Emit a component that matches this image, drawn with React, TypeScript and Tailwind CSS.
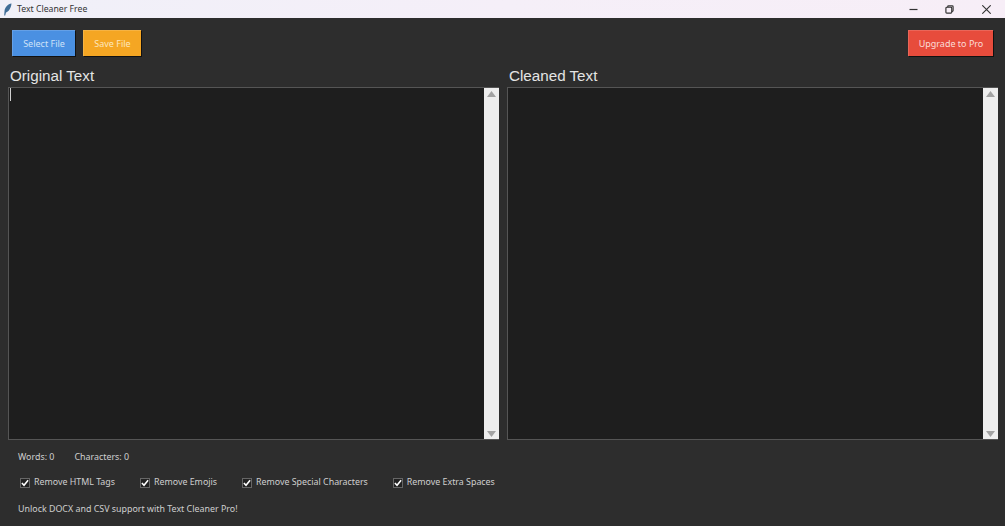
import React from 'react';

const uiFont = "font-['Noto_Sans','Open_Sans',sans-serif]";

const ActionButton: React.FC<{ label: string; className: string }> = ({ label, className }) => (
  <button className={`h-[26px] flex items-center justify-center text-[9px] border-t border-l border-white/15 shadow-[1px_1px_0_#111] ${uiFont} ${className}`}>
    {label}
  </button>
);

const ScrollBar = () => (
  <div className="w-[15px] h-full bg-[#eeeeee] flex flex-col items-center justify-between pt-[3px] pb-[2px] shrink-0">
    <svg width="9" height="6" viewBox="0 0 9 6"><path d="M4.5 0 L9 6 L0 6 Z" fill="#a3a3a3" /></svg>
    <svg width="9" height="6" viewBox="0 0 9 6"><path d="M0 0 L9 0 L4.5 6 Z" fill="#a3a3a3" /></svg>
  </div>
);

const TextPanel: React.FC<{ title: string; caret?: boolean }> = ({ title, caret }) => (
  <div className="flex-1 flex flex-col min-w-0">
    <h2 className="h-[19px] pl-[2px] text-[15.2px] leading-[15px] text-[#e4e4e4] font-['Liberation_Sans',sans-serif]">{title}</h2>
    <div className="flex-1 flex border border-[#555] border-r-0 bg-[#1e1e1e] min-h-0">
      <div className="flex-1 pl-[1px]">
        {caret && <div className="w-[1px] h-[13px] bg-[#d0d0d0]" />}
      </div>
      <ScrollBar />
    </div>
  </div>
);

const Check: React.FC<{ label: string }> = ({ label }) => (
  <label className="flex items-center gap-[4px]">
    <span className="w-[10px] h-[10px] bg-[#222] border border-[#666] flex items-center justify-center">
      <svg width="9" height="8" viewBox="0 0 9 8"><path d="M1 4 L3.4 6.5 L8 1" fill="none" stroke="#fff" strokeWidth="1.8" /></svg>
    </span>
    <span>{label}</span>
  </label>
);

export default function App() {
  return (
    <div className={`w-[1005px] h-[526px] flex flex-col overflow-hidden bg-[#2d2d2d] ${uiFont}`}>
      <div className="h-[18px] shrink-0 flex items-center justify-between bg-gradient-to-r from-[#f0f0f8] via-[#f5eff8] to-[#f7eef7] text-[#333]">
        <div className="flex items-center">
          <svg className="ml-[3px]" width="9" height="13" viewBox="0 0 9 13">
            <path d="M8.5 0.5 C5 1 2 4 1.5 8 L1.2 12.5 L2.2 12.5 L3 9.5 C6 8.5 8 5 8.5 0.5 Z" fill="#3f6d96" />
          </svg>
          <span className="ml-[5px] text-[8.7px] leading-none">Text Cleaner Free</span>
        </div>
        <div className="flex items-center">
          <svg className="mr-[27px]" width="9" height="9" viewBox="0 0 9 9" stroke="#333" strokeWidth="1.2">
            <path d="M0.5 4.5 H8.5" />
          </svg>
          <svg className="mr-[28px]" width="9" height="9" viewBox="0 0 10 10" fill="none" stroke="#333" strokeWidth="1.3">
            <rect x="1" y="2.5" width="6.5" height="6.5" rx="1" />
            <path d="M3 2.5 V2 a1 1 0 0 1 1-1 h4 a1 1 0 0 1 1 1 v4 a1 1 0 0 1-1 1 h-0.5" />
          </svg>
          <svg className="mr-[14px]" width="9" height="9" viewBox="0 0 9 9" stroke="#333" strokeWidth="1.1">
            <path d="M0.3 0.3 L8.7 8.7 M8.7 0.3 L0.3 8.7" />
          </svg>
        </div>
      </div>

      <div className="h-[38px] mt-[12px] shrink-0 flex items-start justify-between pl-[12px] pr-[12px]">
        <div className="flex gap-[8px]">
          <ActionButton label="Select File" className="w-[63px] bg-[#4a90e2] text-[#cfe2f8]" />
          <ActionButton label="Save File" className="w-[58px] bg-[#f5a623] text-[#fde6bd]" />
        </div>
        <ActionButton label="Upgrade to Pro" className="w-[85px] bg-[#e74c3c] text-[#fbdcd8]" />
      </div>

      <div className="h-[372px] shrink-0 flex gap-[8px] pl-[8px] pr-[7px]">
        <TextPanel title="Original Text" caret />
        <TextPanel title="Cleaned Text" />
      </div>

      <div className="flex-1 pl-[18px] text-[8.9px] text-[#cfcfcf]">
        <div className="h-[13px] mt-[10px] flex items-center gap-[20px]">
          <span>Words: 0</span>
          <span>Characters: 0</span>
        </div>
        <div className="h-[13px] mt-[13px] ml-[2px] flex items-center gap-[25px] text-[8.85px]">
          <Check label="Remove HTML Tags" />
          <Check label="Remove Emojis" />
          <Check label="Remove Special Characters" />
          <Check label="Remove Extra Spaces" />
        </div>
        <div className="h-[13px] mt-[13px] flex items-center">Unlock DOCX and CSV support with Text Cleaner Pro!</div>
      </div>
    </div>
  );
}
